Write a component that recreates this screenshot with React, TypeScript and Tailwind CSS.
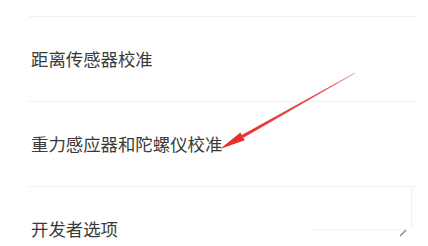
const ITEMS = ['距离传感器校准', '重力感应器和陀螺仪校准', '开发者选项'];

function Arrow() {
  return (
    <svg
      className="absolute inset-0 pointer-events-none"
      width="428"
      height="246"
      viewBox="0 0 428 246"
    >
      <defs>
        <linearGradient id="shaft" x1="242" y1="136" x2="355" y2="73" gradientUnits="userSpaceOnUse">
          <stop offset="0" stopColor="#e8322c" />
          <stop offset="0.7" stopColor="#e4504a" />
          <stop offset="1" stopColor="#d98a8a" />
        </linearGradient>
      </defs>
      <polygon
        points="243.4,137.7 355.2,73.35 354.8,72.65 241.8,134.9"
        fill="url(#shaft)"
      />
      <polygon points="220,149 244.8,140.2 240.4,132.4" fill="#e8302a" />
    </svg>
  );
}

export default function App() {
  return (
    <div className="relative w-[428px] h-[246px] overflow-hidden bg-white font-['Noto_Sans_CJK_SC',sans-serif]">
      <div className="pt-4">
        {ITEMS.map((item) => (
          <div key={item} className="ml-[29px] mr-[11px] h-[85px] border-t border-[#f0f0f0]">
            <div className="pt-[30px] pl-[2px] text-[17.4px] leading-6 text-[#3a3a3a]">{item}</div>
          </div>
        ))}
      </div>
      <div className="absolute left-[411px] top-[188px] h-[40px] w-px bg-[#f0f0f0]" />
      <div className="absolute left-[310px] top-[229px] h-px w-[95px] bg-[#f4f4f4]" />
      <svg className="absolute left-[398px] top-[228px]" width="10" height="10" viewBox="0 0 10 10">
        <line x1="2" y1="8" x2="8" y2="2" stroke="#8a8a8a" strokeWidth="1.4" />
      </svg>
      <Arrow />
    </div>
  );
}
